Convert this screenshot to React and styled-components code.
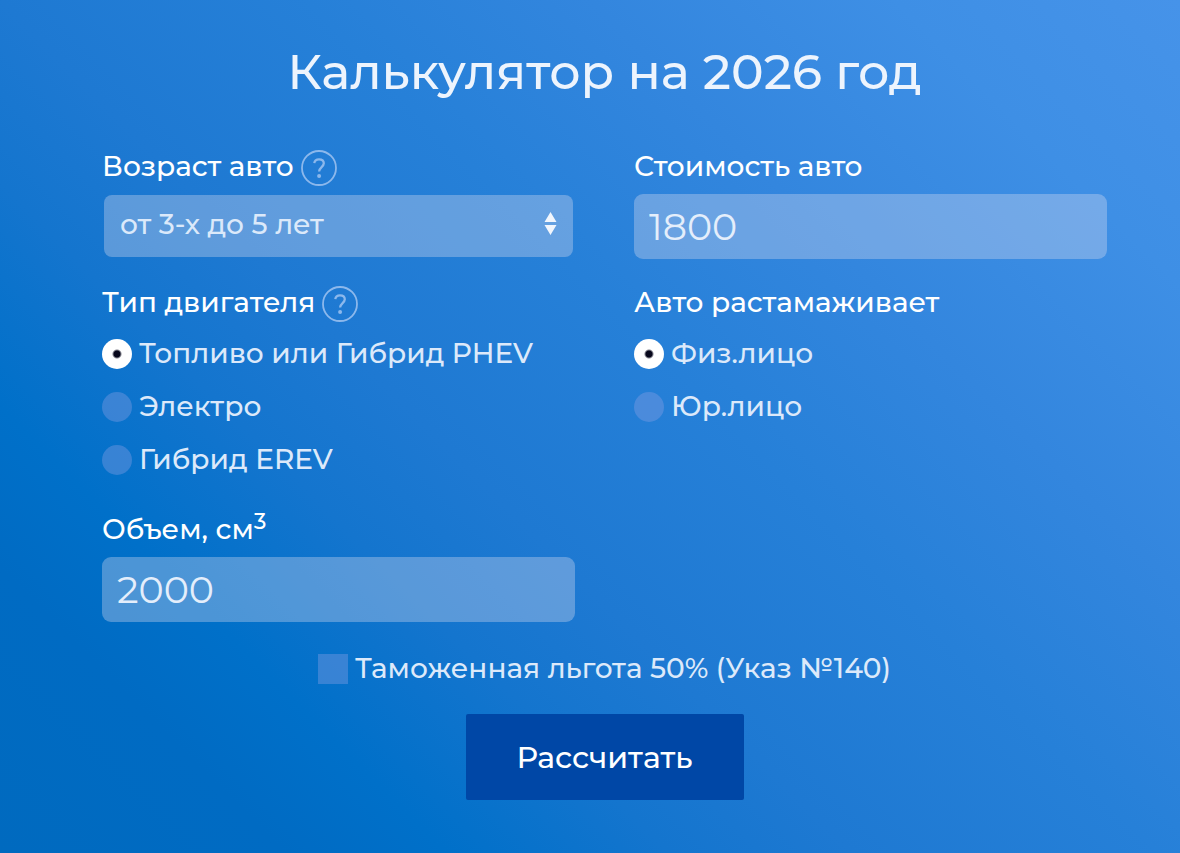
import React, { useState } from "react";
import styled, { createGlobalStyle } from "styled-components";

const GlobalStyle = createGlobalStyle`
  *, *::before, *::after { box-sizing: border-box; }
  body { margin: 0; background: #0070c9; }
  body, button, input, select {
    font-family: Montserrat, Inter, "Noto Sans", sans-serif;
  }
`;

const Page = styled.main`
  min-height: 100vh;
  padding: 40px 73px 53px 102px;
  color: #fff;
  background: linear-gradient(
    45deg,
    #006abf 0%,
    #006bc3 14%,
    #0070c9 22%,
    #1475ce 33%,
    #1e79d2 42%,
    #2680d8 57%,
    #3386de 71%,
    #3e8fe5 86%,
    #4693e9 100%
  );
`;

const Title = styled.h1`
  margin: 0 0 40px;
  font-size: 49px;
  line-height: 64px;
  font-weight: 500;
  text-align: center;
  color: #edf4fd;
`;

const Columns = styled.div`
  display: grid;
  grid-template-columns: 1fr 1fr;
  column-gap: 59px;
  row-gap: 21px;
`;

const Field = styled.div`
  display: flex;
  flex-direction: column;
  min-width: 0;
`;

const Group = styled.fieldset`
  min-width: 0;
  margin: 0;
  padding: 0;
  border: 0;
`;

const Caption = styled.div`
  display: flex;
  align-items: center;
  gap: 7px;
  height: 44px;
  margin-bottom: ${(p) => (p.$tight ? "3px" : "6px")};
  font-size: 28px;
  font-weight: 500;
  line-height: 44px;
  white-space: nowrap;
`;

const Sup = styled.sup`
  font-size: 22px;
  line-height: 0;
`;

const HelpButton = styled.button`
  width: 36px;
  height: 36px;
  margin-top: 3px;
  padding: 0;
  border: 0;
  background: none;
  color: #8cb8ec;
  cursor: pointer;

  svg { display: block; }
`;

const TextInput = styled.input`
  width: 100%;
  height: 65px;
  padding: 0 15px 1px;
  border: 0;
  border-radius: 9px;
  background: rgba(222, 222, 240, 0.34);
  color: #e4eefb;
  font-size: 38px;
`;

const SelectBox = styled.div`
  display: grid;
  align-items: center;
  margin: 1px 2px;
`;

const Select = styled.select`
  grid-area: 1 / 1;
  width: 100%;
  height: 62px;
  padding: 0 44px 4px 16px;
  border: 0;
  border-radius: 8px;
  appearance: none;
  background: rgba(222, 222, 240, 0.34);
  color: #dbe9fa;
  font-size: 28px;
  font-weight: 500;

  option { color: #10395f; }
`;

const Arrows = styled.svg`
  grid-area: 1 / 1;
  justify-self: end;
  margin: 0 16px 4px 0;
  pointer-events: none;
`;

const Option = styled.label`
  display: flex;
  align-items: center;
  gap: 7px;
  height: 53px;
  font-size: 28px;
  font-weight: 500;
  line-height: 53px;
  color: #dce9fa;
  white-space: nowrap;
`;

const Radio = styled.input`
  appearance: none;
  flex: none;
  width: 30px;
  height: 30px;
  margin: 0;
  border-radius: 50%;
  background: rgba(140, 160, 228, 0.38);

  &:checked {
    background: radial-gradient(circle, #08081c 0 3px, #fff 5px);
  }
`;

const Checkbox = styled.input`
  appearance: none;
  flex: none;
  width: 30px;
  height: 30px;
  margin: 0;
  background: rgba(140, 160, 228, 0.38);

  &:checked { background: #fff; box-shadow: inset 0 0 0 9px #3982d6; }
`;

const Footer = styled.div`
  display: flex;
  flex-direction: column;
  align-items: center;
  gap: 19px;
  margin-top: 20px;
`;

const Submit = styled.button`
  width: 278px;
  height: 86px;
  border: 0;
  border-radius: 2px;
  background: #0047a6;
  color: #fff;
  font-size: 30px;
  font-weight: 500;
  cursor: pointer;
`;

function Help({ label }) {
  return (
    <HelpButton type="button" aria-label={label}>
      <svg width="36" height="36" viewBox="0 0 36 36" fill="none" stroke="currentColor">
        <circle cx="18" cy="18" r="17" strokeWidth="1.8" />
        <path d="M13.3 13.2C13.6 10.7 15.3 9.3 18 9.3C20.9 9.3 22.8 10.9 22.8 13.3C22.8 17 18.1 17.2 18.1 21.6" strokeWidth="2.3" />
        <circle cx="18.1" cy="26" r="2" fill="currentColor" stroke="none" />
      </svg>
    </HelpButton>
  );
}

function RadioList({ name, options }) {
  const [value, setValue] = useState(options[0]);
  return options.map((text) => (
    <Option key={text}>
      <Radio type="radio" name={name} checked={value === text} onChange={() => setValue(text)} />
      {text}
    </Option>
  ));
}

export default function App() {
  return (
    <Page>
      <GlobalStyle />
      <Title>Калькулятор на 2026 год</Title>
      <form onSubmit={(e) => e.preventDefault()}>
        <Columns>
          <Field>
            <Caption>
              <label htmlFor="age">Возраст авто</label>
              <Help label="Подсказка: возраст авто" />
            </Caption>
            <SelectBox>
              <Select id="age" defaultValue="3-5">
                <option value="0-3">до 3-х лет</option>
                <option value="3-5">от 3-х до 5 лет</option>
                <option value="5+">старше 5 лет</option>
              </Select>
              <Arrows width="13" height="24" viewBox="0 0 13 24" fill="#f1f6fd" aria-hidden="true">
                <path d="M6.5 0L12.5 10H0.5ZM0.5 13H12.5L6.5 23Z" />
              </Arrows>
            </SelectBox>
          </Field>
          <Field>
            <Caption>
              <label htmlFor="price">Стоимость авто</label>
            </Caption>
            <TextInput id="price" inputMode="numeric" defaultValue="1800" />
          </Field>
          <Group aria-labelledby="engine">
            <Caption $tight>
              <span id="engine">Тип двигателя</span>
              <Help label="Подсказка: тип двигателя" />
            </Caption>
            <RadioList name="engine" options={["Топливо или Гибрид PHEV", "Электро", "Гибрид EREV"]} />
          </Group>
          <Group aria-labelledby="payer">
            <Caption $tight>
              <span id="payer">Авто растамаживает</span>
            </Caption>
            <RadioList name="payer" options={["Физ.лицо", "Юр.лицо"]} />
          </Group>
          <Field>
            <Caption>
              <label htmlFor="volume">Объем, см<Sup>3</Sup></label>
            </Caption>
            <TextInput id="volume" inputMode="numeric" defaultValue="2000" />
          </Field>
        </Columns>
        <Footer>
          <Option>
            <Checkbox type="checkbox" />
            Таможенная льгота 50% (Указ №140)
          </Option>
          <Submit type="submit">Рассчитать</Submit>
        </Footer>
      </form>
    </Page>
  );
}
